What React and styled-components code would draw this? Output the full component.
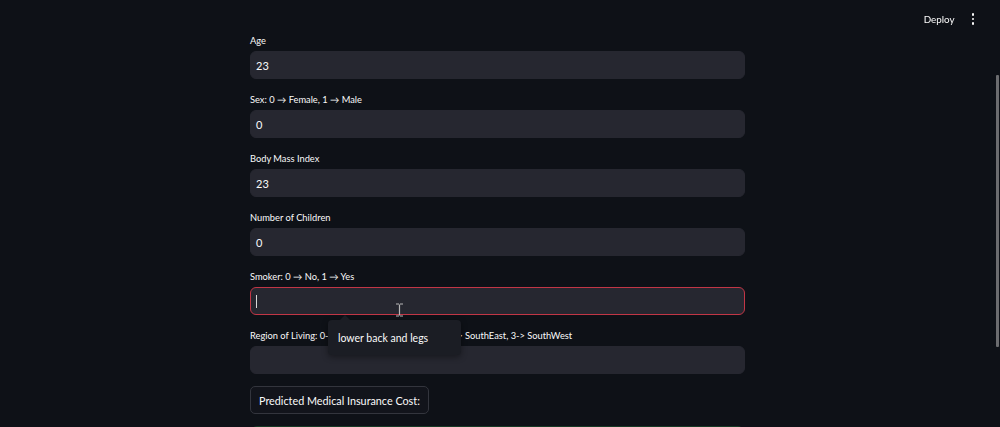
import React from "react";
import styled, { createGlobalStyle } from "styled-components";

const GlobalStyle = createGlobalStyle`
  html, body {
    margin: 0;
    padding: 0;
    background: #0e1117;
    overflow: hidden;
  }
  body {
    font-family: "Lato", "Noto Sans", sans-serif;
    color: #fafafa;
  }
`;

const Page = styled.div`
  position: relative;
  height: 427px;
  padding-right: 5px;
  overflow: hidden;
  background: #0e1117;
`;

const Header = styled.header`
  position: fixed;
  top: 0;
  left: 0;
  right: 0;
  height: 38px;
  display: flex;
  justify-content: flex-end;
  align-items: center;
  gap: 17px;
  padding-right: 26px;
  z-index: 5;
`;

const DeployButton = styled.button`
  background: none;
  border: none;
  color: #fafafa;
  font-family: inherit;
  font-size: 9.8px;
  padding: 0;
  cursor: pointer;
`;

const MenuDots = styled.span`
  display: flex;
  flex-direction: column;
  gap: 2px;
  span {
    width: 2.5px;
    height: 2.5px;
    border-radius: 50%;
    background: #fafafa;
  }
`;

const Scrollbar = styled.div`
  position: fixed;
  right: 1px;
  top: 75px;
  width: 3px;
  height: 272px;
  background: #6b6c6f;
  border-radius: 1px;
`;

const Main = styled.main`
  width: 495px;
  margin: 0 auto;
  padding-top: 34px;
  display: flex;
  flex-direction: column;
  gap: 14px;
`;

const Field = styled.div`
  position: relative;
  display: flex;
  flex-direction: column;
  gap: 4px;
`;

const Label = styled.label`
  font-size: 9.3px;
  line-height: 13px;
  color: #fafafa;
  white-space: nowrap;
`;

const InputBox = styled.div`
  height: 28px;
  box-sizing: border-box;
  background: #262730;
  border: 1px solid ${(p) => (p.$focused ? "#c23646" : "#262730")};
  border-radius: 6px;
  display: flex;
  align-items: center;
  padding: 0 5px;
  font-size: 11px;
  color: #fafafa;
`;

const Caret = styled.span`
  width: 1px;
  height: 13px;
  background: #d8d8d8;
`;

const Tooltip = styled.div`
  position: absolute;
  left: 78px;
  top: 50px;
  width: 133px;
  height: 35px;
  box-sizing: border-box;
  background: #1b1d24;
  border-radius: 4px;
  box-shadow: 0 2px 6px rgba(0, 0, 0, 0.4);
  display: flex;
  align-items: center;
  padding-left: 10px;
  font-size: 10.5px;
  color: #fafafa;
  z-index: 3;
  &::before {
    content: "";
    position: absolute;
    top: -5px;
    left: 12px;
    border-left: 5px solid transparent;
    border-right: 5px solid transparent;
    border-bottom: 5px solid #1b1d24;
  }
`;

const Pointer = styled.svg`
  position: absolute;
  left: 145px;
  top: 33px;
  z-index: 4;
`;

const ActionButton = styled.button`
  align-self: flex-start;
  margin-top: -2px;
  height: 28px;
  padding: 0 8px;
  background: #12141b;
  border: 1px solid #33353d;
  border-radius: 5px;
  color: #fafafa;
  font-family: inherit;
  font-size: 10.8px;
`;

const ResultBar = styled.div`
  height: 30px;
  margin: -2px 2px 0 2px;
  background: #173a26;
  border-radius: 5px;
`;

const fields = [
  { label: "Age", value: "23" },
  { label: "Sex: 0 → Female, 1 → Male", value: "0" },
  { label: "Body Mass Index", value: "23" },
  { label: "Number of Children", value: "0" },
  { label: "Smoker: 0 → No, 1 → Yes", value: "", focused: true },
  {
    label:
      "Region of Living: 0-> NorthEast, 1-> NorthWest, 2-> SouthEast, 3-> SouthWest",
    value: "",
  },
];

export default function App() {
  return (
    <Page>
      <GlobalStyle />
      <Header>
        <DeployButton>Deploy</DeployButton>
        <MenuDots>
          <span />
          <span />
          <span />
        </MenuDots>
      </Header>
      <Scrollbar />
      <Main>
        {fields.map((f) => (
          <Field key={f.label}>
            <Label>{f.label}</Label>
            <InputBox $focused={f.focused}>
              {f.focused ? <Caret /> : f.value}
            </InputBox>
            {f.focused && (
              <>
                <Pointer width="9" height="14" viewBox="0 0 9 14">
                  <path
                    d="M1 1h3M5 1h3M4.5 1.5v11M1 13h3M5 13h3"
                    stroke="#b8b8b8"
                    strokeWidth="1.2"
                    fill="none"
                  />
                </Pointer>
                <Tooltip>lower back and legs</Tooltip>
              </>
            )}
          </Field>
        ))}
        <ActionButton>Predicted Medical Insurance Cost:</ActionButton>
        <ResultBar />
      </Main>
    </Page>
  );
}
